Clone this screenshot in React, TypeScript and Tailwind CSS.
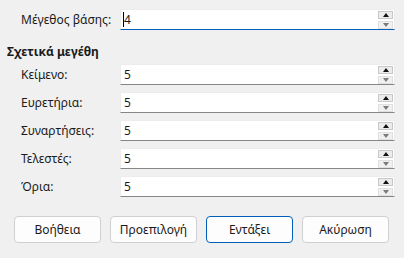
import React from "react";

type SpinFieldProps = {
  value: string;
  focused?: boolean;
};

function SpinField({ value, focused }: SpinFieldProps) {
  return (
    <div
      className={
        "flex h-[21px] w-[275px] items-stretch justify-between border border-[#ececec] bg-white " +
        (focused ? "border-b-[#005fb8]" : "border-b-[#868686]")
      }
    >
      <div className="flex items-center pl-[2px]">
        {focused && <span className="h-[15px] w-px bg-black" />}
        <span className={focused ? "" : "pl-px"}>{value}</span>
      </div>
      <div className="flex flex-col gap-[2px] pr-px pt-px">
        <span className="flex h-[8px] w-[15px] items-center justify-center border border-[#c8c8c8] bg-[#ececec]">
          <svg width="6" height="4" viewBox="0 0 6 4">
            <path d="M0 4 L3 0 L6 4 Z" fill="#111" />
          </svg>
        </span>
        <span className="flex h-[8px] w-[15px] items-center justify-center border border-[#e0e0e0] bg-[#f0f0f0]">
          <svg width="6" height="4" viewBox="0 0 6 4">
            <path d="M0 0 L6 0 L3 4 Z" fill="#7a7a7a" />
          </svg>
        </span>
      </div>
    </div>
  );
}

const rows = [
  { label: "Κείμενο:", value: "5" },
  { label: "Ευρετήρια:", value: "5" },
  { label: "Συναρτήσεις:", value: "5" },
  { label: "Τελεστές:", value: "5" },
  { label: "Όρια:", value: "5" },
];

const buttons = [
  { label: "Βοήθεια" },
  { label: "Προεπιλογή" },
  { label: "Εντάξει", primary: true },
  { label: "Ακύρωση" },
];

export default function App() {
  return (
    <div className="h-[258px] w-[404px] bg-[#f0f0f0] pt-[9px] font-['Noto_Sans',sans-serif] text-[12px] text-[#1a1a1a]">
      {/* Base size */}
      <div className="flex h-[21px] items-center">
        <span className="w-[120px] pl-[21px]">Μέγεθος βάσης:</span>
        <SpinField value="4" focused />
      </div>

      {/* Relative sizes */}
      <div className="mt-[14px] h-[16px] pl-[7px] text-[12px] font-bold leading-[16px]">
        Σχετικά μεγέθη
      </div>
      <div className="mt-[4px] flex flex-col gap-[7px]">
        {rows.map((row) => (
          <div key={row.label} className="flex h-[21px] items-center">
            <span className="w-[120px] pl-[21px]">{row.label}</span>
            <SpinField value={row.value} />
          </div>
        ))}
      </div>

      {/* Dialog buttons */}
      <div className="mt-[19px] flex gap-[9px] pl-[14px]">
        {buttons.map((b) => (
          <button
            key={b.label}
            className={
              "flex h-[27px] w-[87px] items-center justify-center rounded-[4px] border bg-[#fdfdfd] " +
              (b.primary ? "border-[#005fb8]" : "border-[#d0d0d0]")
            }
          >
            {b.label}
          </button>
        ))}
      </div>
    </div>
  );
}
